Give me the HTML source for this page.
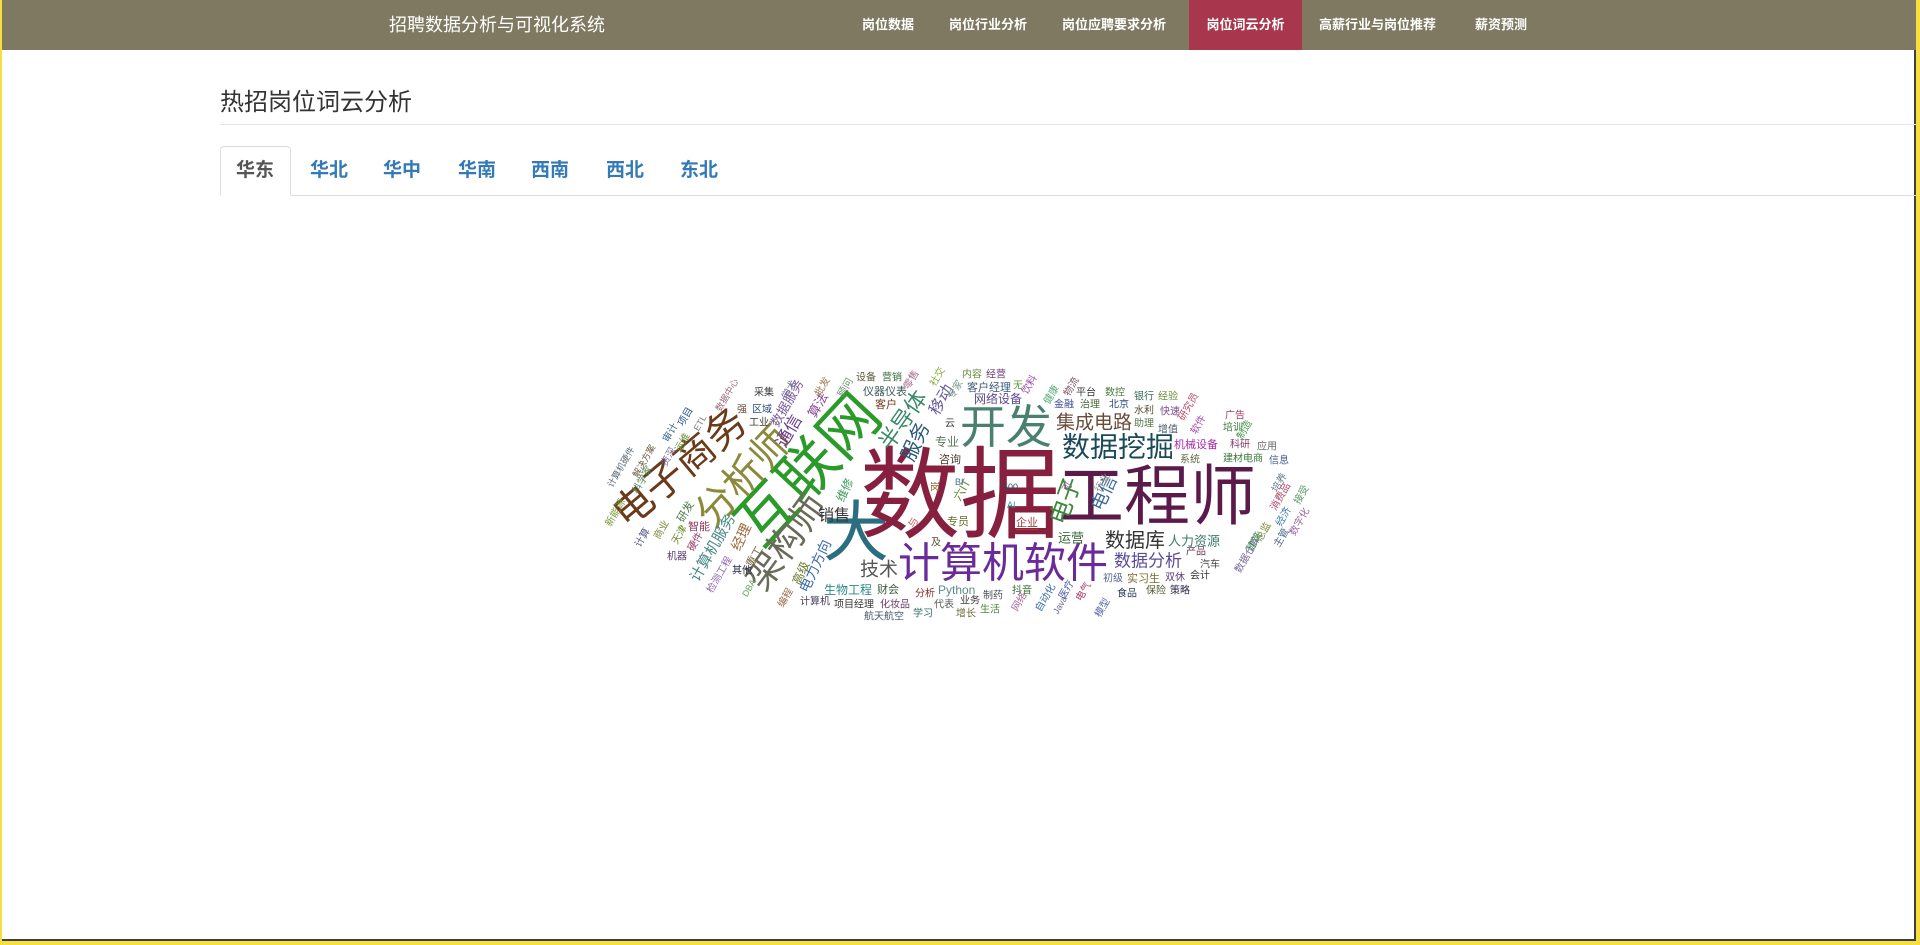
<!DOCTYPE html>
<html><head><meta charset="utf-8"><style>
html,body{margin:0;padding:0;width:1920px;height:945px;overflow:hidden;background:#f7df3e;font-family:"Liberation Sans","Noto Sans CJK SC",sans-serif;}
#frame{position:absolute;left:2px;top:0;width:1912px;height:939px;background:#fff;border-right:2px solid #3f3f48;border-bottom:2px solid #3f3f48;}
#hdr{position:absolute;left:0;top:0;width:1914px;height:50px;background:#7f7961;}
.brand{position:absolute;left:387px;top:12px;font-size:18px;color:#fff;line-height:26px;white-space:nowrap;}
.nav{position:absolute;top:0;height:50px;line-height:50px;font-size:13px;font-weight:bold;color:#fff;white-space:nowrap;}
.act{background:#a8364c;}
.title{position:absolute;left:218px;top:88px;font-size:24px;color:#333;line-height:30px;}
.hr1{position:absolute;left:218px;top:124px;width:1696px;height:1px;background:#e6e6e6;}
.tabline{position:absolute;left:218px;top:195px;width:1696px;height:1px;background:#ddd;}
.tabact{position:absolute;left:218px;top:146px;width:71px;height:50px;border:1px solid #ddd;border-bottom:1px solid #fff;border-radius:4px 4px 0 0;background:#fff;box-sizing:border-box;}
.tab{position:absolute;top:158px;font-size:19px;font-weight:bold;color:#337ab7;line-height:26px;white-space:nowrap;}
svg{position:absolute;left:0;top:0;}
svg text{font-family:"Liberation Sans","Noto Sans CJK SC",sans-serif;}
</style></head><body>
<div id="frame">
<div id="hdr">
<div class="brand">招聘数据分析与可视化系统</div>
<div class="nav" style="left:845px;padding:0 15px">岗位数据</div>
<div class="nav" style="left:932px;padding:0 15px">岗位行业分析</div>
<div class="nav" style="left:1045px;padding:0 15px">岗位应聘要求分析</div>
<div class="nav act" style="left:1187px;width:113px;text-align:center">岗位词云分析</div>
<div class="nav" style="left:1302px;padding:0 15px">高薪行业与岗位推荐</div>
<div class="nav" style="left:1458px;padding:0 15px">薪资预测</div>
</div>
<div class="title">热招岗位词云分析</div>
<div class="hr1"></div>
<div class="tabline"></div>
<div class="tabact"></div>
<div class="tab" style="left:234px;color:#555">华东</div>
<div class="tab" style="left:308px">华北</div>
<div class="tab" style="left:381px">华中</div>
<div class="tab" style="left:456px">华南</div>
<div class="tab" style="left:529px">西南</div>
<div class="tab" style="left:604px">西北</div>
<div class="tab" style="left:678px">东北</div>
</div>
<svg width="1920" height="945" viewBox="0 0 1920 945">
<g text-anchor="middle" dominant-baseline="central">
<text x="856" y="532" font-size="66" fill="#2a6e80">大</text>
<text x="960" y="496" font-size="100" fill="#87203f">数据</text>
<text x="1157" y="496" font-size="66" fill="#5a1a4a">工程师</text>
<text x="1006" y="427" font-size="46" fill="#4a8070">开发</text>
<text x="1003" y="563" font-size="42" fill="#6a2a9a">计算机软件</text>
<text transform="translate(808,470) rotate(-47)" font-size="60" fill="#2a9a2a">互联网</text>
<text transform="translate(680,468) rotate(-40)" font-size="40" fill="#6a3a1a">电子商务</text>
<text transform="translate(744,477) rotate(-47)" font-size="40" fill="#8a8a3a">分析师</text>
<text transform="translate(786,542) rotate(-54)" font-size="36" fill="#6a6a5a">架构师</text>
<text x="1118" y="447" font-size="28" fill="#1a4a5a">数据挖掘</text>
<text x="1094" y="423" font-size="19" fill="#6a4a3a">集成电路</text>
<text x="1135" y="541" font-size="20" fill="#333">数据库</text>
<text x="1148" y="561" font-size="17" fill="#5a4a9a">数据分析</text>
<text x="879" y="570" font-size="19" fill="#555">技术</text>
<text transform="translate(903,420) rotate(-55)" font-size="22" fill="#3a8a6a">半导体</text>
<text transform="translate(916,442) rotate(-65)" font-size="20" fill="#2a5a7a">服务</text>
<text transform="translate(942,400) rotate(-60)" font-size="16" fill="#6a5a9a">移动</text>
<text transform="translate(1066,501) rotate(-70)" font-size="24" fill="#3a8a3a">电子</text>
<text transform="translate(1104,493) rotate(-65)" font-size="18" fill="#3a6a9a">电信</text>
<text transform="translate(713,548) rotate(-60)" font-size="15" fill="#4a8a8a">计算机服务</text>
<text transform="translate(789,431) rotate(-60)" font-size="17" fill="#6a3a8a">通信</text>
<text transform="translate(787,403) rotate(-60)" font-size="13" fill="#7a5a9a">数据服务</text>
<text transform="translate(818,405) rotate(-60)" font-size="13" fill="#8a4a9a">算法</text>
<text transform="translate(741,537) rotate(-65)" font-size="14" fill="#9a6a3a">经理</text>
<text transform="translate(815,566) rotate(-65)" font-size="14" fill="#3a6aaa">电力方向</text>
<text transform="translate(801,573) rotate(-65)" font-size="12" fill="#6a7a2a">高级</text>
<text transform="translate(845,490) rotate(-65)" font-size="12" fill="#3a9a5a">维修</text>
<text transform="translate(755,557) rotate(-60)" font-size="11" fill="#7a6a4a">重工</text>
<text transform="translate(686,512) rotate(-60)" font-size="11" fill="#4a7a4a">研发</text>
<text transform="translate(962,490) rotate(-60)" font-size="12" fill="#6a8a3a">六IT</text>
</g>
<g font-size="10" text-anchor="middle" dominant-baseline="central">
<text transform="translate(621,467) rotate(-60)" fill="#5a6a7a" font-size="9">计算机硬件</text>
<text transform="translate(644,461) rotate(-60)" fill="#6a5a3a" font-size="9">解决方案</text>
<text transform="translate(643,480) rotate(-60)" fill="#5a8a5a">科学家</text>
<text transform="translate(669,457) rotate(-60)" fill="#7a6a9a">资深</text>
<text transform="translate(671,433) rotate(-60)" fill="#3a6a8a">审计</text>
<text transform="translate(686,417) rotate(-60)" fill="#2a5a8a">项目</text>
<text transform="translate(683,443) rotate(-60)" fill="#6a9a4a">运维</text>
<text transform="translate(700,423) rotate(-60)" fill="#7a7a7a" font-size="9">ETL</text>
<text transform="translate(616,513) rotate(-60)" fill="#7a9a3a">新能源</text>
<text transform="translate(680,535) rotate(-60)" fill="#6a8a2a">天津</text>
<text transform="translate(643,538) rotate(-60)" fill="#5a5a8a">计算</text>
<text transform="translate(662,530) rotate(-60)" fill="#7a8a3a">商业</text>
<text transform="translate(696,542) rotate(-60)" fill="#9a3a6a">硬件</text>
<text transform="translate(720,575) rotate(-60)" fill="#8a6aaa">检测工程</text>
<text transform="translate(749,588) rotate(-60)" fill="#5aaa5a" font-size="9">DBA</text>
<text transform="translate(786,598) rotate(-60)" fill="#9a6a4a">编程</text>
<text transform="translate(727,395) rotate(-60)" fill="#9a6a7a" font-size="9">数据中心</text>
<text transform="translate(790,390) rotate(-60)" fill="#7a7a9a">学术</text>
<text transform="translate(823,387) rotate(-60)" fill="#9a7a4a">批发</text>
<text transform="translate(846,388) rotate(-60)" fill="#6a8a6a">顾问</text>
<text transform="translate(912,380) rotate(-60)" fill="#aa6a8a">零售</text>
<text transform="translate(938,377) rotate(-60)" fill="#8aaa3a">社交</text>
<text transform="translate(956,390) rotate(-60)" fill="#7a9a8a">专家</text>
<text transform="translate(1030,385) rotate(-60)" fill="#9a4aaa">饮料</text>
<text transform="translate(1052,395) rotate(-60)" fill="#5aaa7a">健康</text>
<text transform="translate(1072,387) rotate(-60)" fill="#7a5a6a">物流</text>
<text transform="translate(1189,407) rotate(-60)" fill="#c04a6a">研究员</text>
<text transform="translate(1199,425) rotate(-60)" fill="#aa4aaa">软件</text>
<text transform="translate(1245,430) rotate(-60)" fill="#4a9a4a">制造</text>
<text transform="translate(1068,487) rotate(-60)" fill="#aa5aaa">可</text>
<text transform="translate(1103,483) rotate(-60)" fill="#8a8a8a">行业</text>
<text transform="translate(1280,483) rotate(-60)" fill="#6a7a8a">培养</text>
<text transform="translate(1281,497) rotate(-60)" fill="#b04a6a">消费品</text>
<text transform="translate(1284,517) rotate(-60)" fill="#3a7aaa">经济</text>
<text transform="translate(1302,495) rotate(-60)" fill="#5a9a6a">接受</text>
<text transform="translate(1300,522) rotate(-60)" fill="#9a6a9a">数字化</text>
<text transform="translate(1282,538) rotate(-60)" fill="#4a6a8a">主管</text>
<text transform="translate(1264,532) rotate(-60)" fill="#7a8a3a">总监</text>
<text transform="translate(1248,555) rotate(-60)" fill="#7a6a9a">数据仓库</text>
<text transform="translate(1255,542) rotate(-60)" fill="#3a8a5a">建筑</text>
<text transform="translate(1103,608) rotate(-60)" fill="#5a6aaa">模型</text>
<text transform="translate(1084,592) rotate(-60)" fill="#aa3a6a">电气</text>
<text transform="translate(1067,590) rotate(-60)" fill="#4a5aaa">医疗</text>
<text transform="translate(1046,598) rotate(-60)" fill="#3a6aaa">自动化</text>
<text transform="translate(1060,605) rotate(-60)" fill="#6a6a8a" font-size="9">Java</text>
<text transform="translate(1020,602) rotate(-60)" fill="#aa6a9a">网络</text>
<text transform="translate(914,523) rotate(-60)" fill="#c05a5a">与</text>
</g>
<g font-size="10" dominant-baseline="central">
<text x="856" y="378" fill="#5a5a3a">设备</text><text x="882" y="378" fill="#3a6a3a">营销</text>
<text x="962" y="375" fill="#6a8a3a">内容</text><text x="986" y="375" fill="#6a3a7a">经营</text>
<text x="967" y="388" fill="#3a5a7a" font-size="11">客户经理</text><text x="1013" y="386" fill="#5a9a3a">无</text>
<text x="863" y="392" fill="#3a5a5a" font-size="11">仪器仪表</text><text x="754" y="393" fill="#3a3a3a">采集</text>
<text x="752" y="410" fill="#2a4a7a">区域</text><text x="737" y="410" fill="#6a4a3a">强</text>
<text x="1076" y="393" fill="#3a3a3a">平台</text><text x="1105" y="393" fill="#4a7a3a">数控</text>
<text x="1134" y="397" fill="#3a6a5a">银行</text><text x="1158" y="397" fill="#6a8a3a">经验</text>
<text x="875" y="405" fill="#6a3a1a" font-size="11">客户</text><text x="974" y="399" fill="#5a4a8a" font-size="12">网络设备</text>
<text x="1054" y="405" fill="#3a4a9a">金融</text><text x="1080" y="405" fill="#4a6a3a">治理</text>
<text x="1109" y="405" fill="#2a4a7a">北京</text><text x="1134" y="411" fill="#5a4a2a">水利</text>
<text x="1160" y="412" fill="#7a4a8a">快速</text><text x="1225" y="416" fill="#aa3a5a">广告</text>
<text x="1223" y="428" fill="#3a7a3a">培训</text>
<text x="749" y="423" fill="#3a3a3a">工业</text><text x="1158" y="430" fill="#4a5a6a">增值</text>
<text x="1134" y="424" fill="#5a7a4a">助理</text><text x="945" y="424" fill="#3a3a3a">云</text>
<text x="935" y="442" fill="#5a7a5a" font-size="12">专业</text><text x="1174" y="445" fill="#aa2aaa" font-size="11">机械设备</text>
<text x="1230" y="445" fill="#8a3a6a">科研</text><text x="1257" y="447" fill="#6a6a6a">应用</text>
<text x="939" y="460" fill="#4a3a2a" font-size="11">咨询</text><text x="1180" y="460" fill="#5a6a3a">系统</text>
<text x="1223" y="459" fill="#3a7a3a">建材电商</text><text x="1269" y="461" fill="#4a5a8a">信息</text>
<text x="818" y="516" fill="#3a3a3a" font-size="16">销售</text>
<text x="930" y="488" fill="#8a6a2a">岗</text><text x="955" y="482" fill="#4a6a9a" font-size="9">BI</text>
<text x="1003" y="487" fill="#2a4a5a" font-size="9">500</text><text x="1007" y="505" fill="#2a9aaa" font-size="9">AI</text>
<text x="947" y="522" fill="#6a6a2a" font-size="11">专员</text><text x="1016" y="523" fill="#aa3a3a" font-size="11" text-decoration="underline">企业</text>
<text x="688" y="527" fill="#8a3a5a" font-size="11">智能</text><text x="1058" y="538" fill="#3a6a3a" font-size="13">运营</text>
<text x="1168" y="541" fill="#3a7a6a" font-size="13">人力资源</text>
<text x="931" y="543" fill="#5a4a2a">及</text><text x="667" y="557" fill="#5a3a6a">机器</text>
<text x="732" y="571" fill="#2a2a4a">其他</text><text x="1186" y="552" fill="#6a3a5a">产品</text>
<text x="1200" y="565" fill="#4a4a4a">汽车</text>
<text x="1103" y="579" fill="#5a6a8a">初级</text><text x="1127" y="579" fill="#7a6a2a" font-size="11">实习生</text>
<text x="1165" y="578" fill="#5a3a7a">双休</text><text x="1190" y="576" fill="#3a3a3a">会计</text>
<text x="824" y="590" fill="#2a8a8a" font-size="12">生物工程</text><text x="877" y="590" fill="#3a5a3a" font-size="11">财会</text>
<text x="938" y="590" fill="#5a8a8a" font-size="12">Python</text><text x="983" y="596" fill="#4a4a5a">制药</text>
<text x="1012" y="591" fill="#3a6a3a">抖音</text><text x="915" y="594" fill="#8a2a2a">分析</text>
<text x="1117" y="594" fill="#2a3a5a">食品</text><text x="1146" y="591" fill="#4a5a2a">保险</text>
<text x="1170" y="591" fill="#2a2a4a">策略</text>
<text x="800" y="602" fill="#4a3a5a">计算机</text><text x="834" y="605" fill="#3a3a3a">项目经理</text>
<text x="880" y="605" fill="#6a3a6a">化妆品</text><text x="934" y="605" fill="#5a5a5a">代表</text>
<text x="960" y="601" fill="#3a3a3a">业务</text><text x="980" y="610" fill="#4a8a3a">生活</text>
<text x="864" y="617" fill="#4a5a6a">航天航空</text><text x="913" y="614" fill="#3a6a6a">学习</text>
<text x="956" y="614" fill="#6a6a3a">增长</text>
</g>
</svg>
</body></html>
